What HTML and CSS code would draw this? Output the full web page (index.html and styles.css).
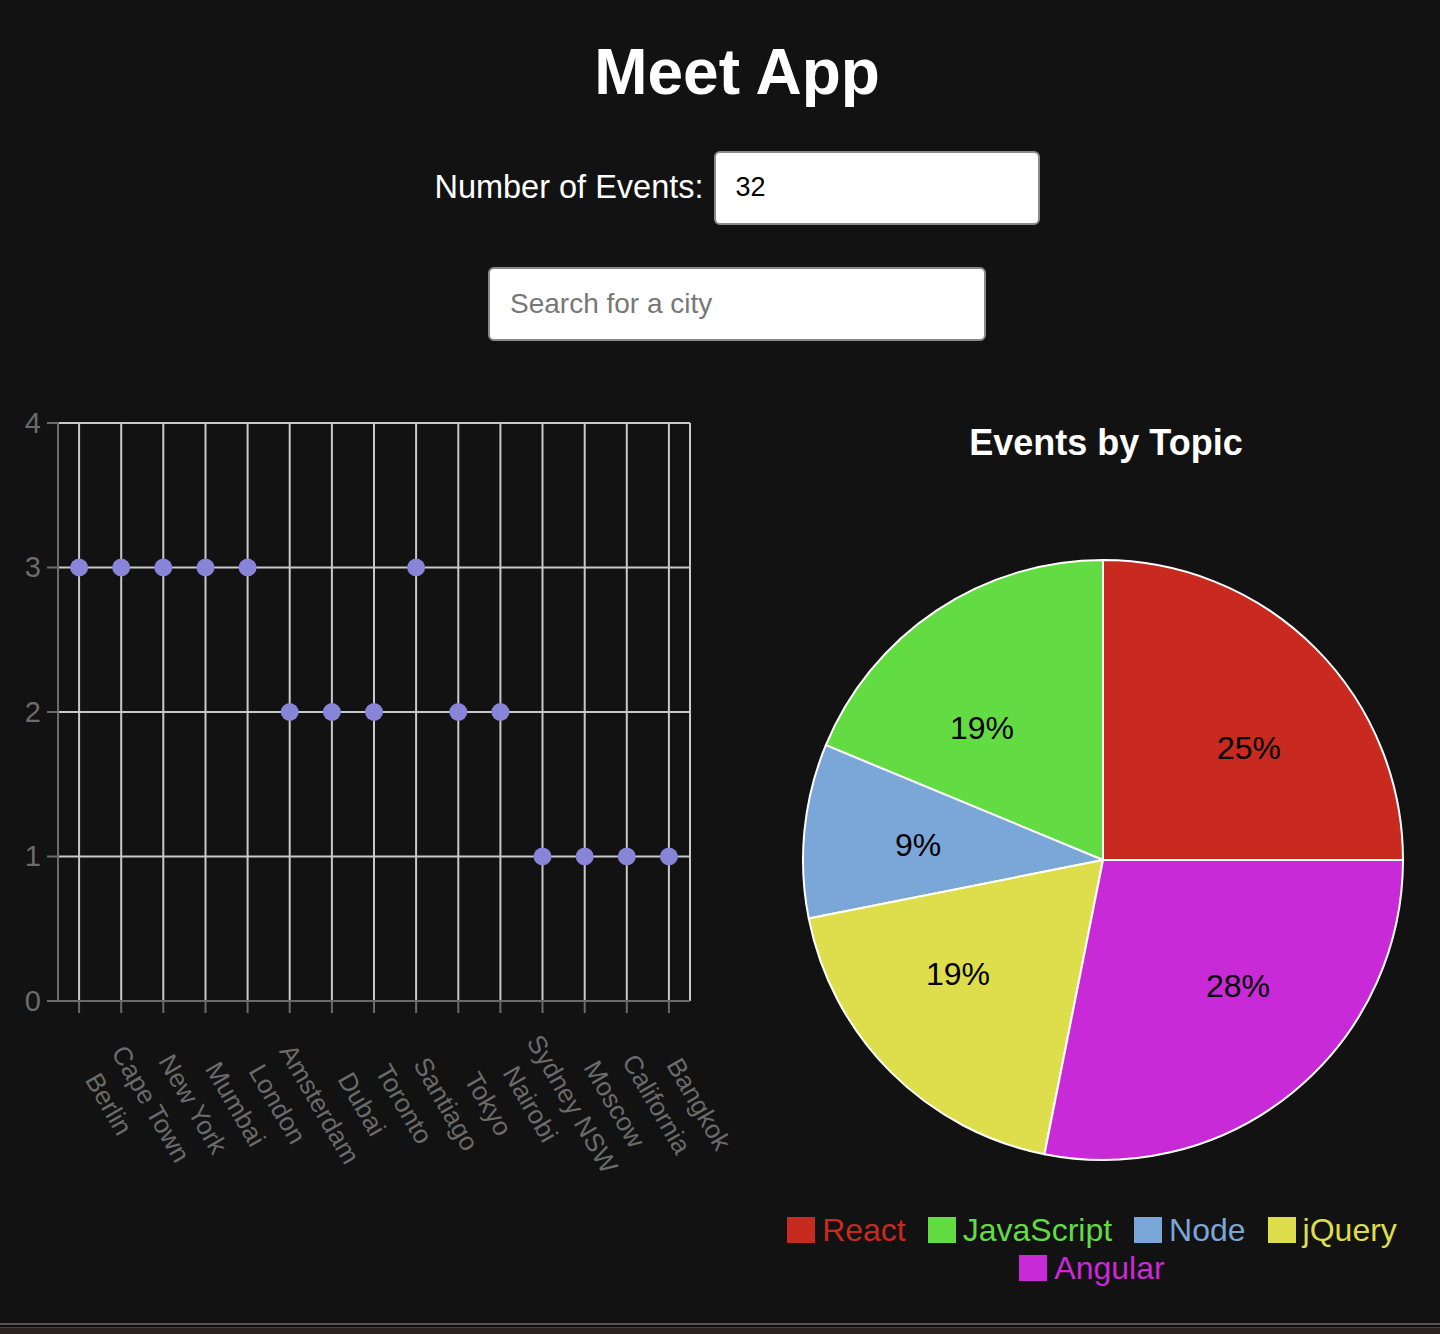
FILE: index.html
```html
<!DOCTYPE html>
<html lang="en">
<head>
<meta charset="utf-8">
<title>Meet App</title>
<link rel="stylesheet" href="styles.css">
</head>
<body>
<div class="page">
  <header class="header">
    <h1 class="title">Meet App</h1>
    <div class="events-row">
      <label class="events-label" for="num">Number of Events:</label>
      <input class="field events-input" id="num" type="text" value="32">
    </div>
    <input class="field search-input" type="text" placeholder="Search for a city">
  </header>

  <section class="charts">
    <svg class="scatter" width="760" height="800" viewBox="0 400 760 800" xmlns="http://www.w3.org/2000/svg">
      <g class="grid" stroke="#c9c9c9" stroke-width="2" fill="none">
        <line x1="58" y1="423" x2="690" y2="423"/>
        <line x1="58" y1="567.5" x2="690" y2="567.5"/>
        <line x1="58" y1="712" x2="690" y2="712"/>
        <line x1="58" y1="856.5" x2="690" y2="856.5"/>
        <line x1="79.1" y1="423" x2="79.1" y2="1001"/>
        <line x1="121.2" y1="423" x2="121.2" y2="1001"/>
        <line x1="163.3" y1="423" x2="163.3" y2="1001"/>
        <line x1="205.5" y1="423" x2="205.5" y2="1001"/>
        <line x1="247.6" y1="423" x2="247.6" y2="1001"/>
        <line x1="289.7" y1="423" x2="289.7" y2="1001"/>
        <line x1="331.9" y1="423" x2="331.9" y2="1001"/>
        <line x1="374" y1="423" x2="374" y2="1001"/>
        <line x1="416.1" y1="423" x2="416.1" y2="1001"/>
        <line x1="458.3" y1="423" x2="458.3" y2="1001"/>
        <line x1="500.4" y1="423" x2="500.4" y2="1001"/>
        <line x1="542.5" y1="423" x2="542.5" y2="1001"/>
        <line x1="584.7" y1="423" x2="584.7" y2="1001"/>
        <line x1="626.8" y1="423" x2="626.8" y2="1001"/>
        <line x1="668.9" y1="423" x2="668.9" y2="1001"/>
        <line x1="690" y1="423" x2="690" y2="1001"/>
      </g>
      <g class="axes" stroke="#6b6b6b" stroke-width="2" fill="none">
        <line x1="58" y1="422" x2="58" y2="1001"/>
        <line x1="57" y1="1001" x2="690" y2="1001"/>
        <line x1="47" y1="423" x2="58" y2="423"/>
        <line x1="47" y1="567.5" x2="58" y2="567.5"/>
        <line x1="47" y1="712" x2="58" y2="712"/>
        <line x1="47" y1="856.5" x2="58" y2="856.5"/>
        <line x1="47" y1="1001" x2="58" y2="1001"/>
        <line x1="79.1" y1="1001" x2="79.1" y2="1013"/>
        <line x1="121.2" y1="1001" x2="121.2" y2="1013"/>
        <line x1="163.3" y1="1001" x2="163.3" y2="1013"/>
        <line x1="205.5" y1="1001" x2="205.5" y2="1013"/>
        <line x1="247.6" y1="1001" x2="247.6" y2="1013"/>
        <line x1="289.7" y1="1001" x2="289.7" y2="1013"/>
        <line x1="331.9" y1="1001" x2="331.9" y2="1013"/>
        <line x1="374" y1="1001" x2="374" y2="1013"/>
        <line x1="416.1" y1="1001" x2="416.1" y2="1013"/>
        <line x1="458.3" y1="1001" x2="458.3" y2="1013"/>
        <line x1="500.4" y1="1001" x2="500.4" y2="1013"/>
        <line x1="542.5" y1="1001" x2="542.5" y2="1013"/>
        <line x1="584.7" y1="1001" x2="584.7" y2="1013"/>
        <line x1="626.8" y1="1001" x2="626.8" y2="1013"/>
        <line x1="668.9" y1="1001" x2="668.9" y2="1013"/>
      </g>
      <g class="y-labels" fill="#6b6b6b" text-anchor="end" dominant-baseline="central">
        <text x="41" y="423">4</text>
        <text x="41" y="567">3</text>
        <text x="41" y="712">2</text>
        <text x="41" y="856">1</text>
        <text x="41" y="1001">0</text>
      </g>
      <g class="x-labels" fill="#6b6b6b" text-anchor="middle" dominant-baseline="central">
        <text x="109" y="1104" transform="rotate(60 109 1104)">Berlin</text>
        <text x="151" y="1104" transform="rotate(60 151 1104)">Cape Town</text>
        <text x="193" y="1104" transform="rotate(60 193 1104)">New York</text>
        <text x="235.5" y="1104" transform="rotate(60 235.5 1104)">Mumbai</text>
        <text x="277.6" y="1104" transform="rotate(60 277.6 1104)">London</text>
        <text x="319.7" y="1104" transform="rotate(60 319.7 1104)">Amsterdam</text>
        <text x="361.9" y="1104" transform="rotate(60 361.9 1104)">Dubai</text>
        <text x="404" y="1104" transform="rotate(60 404 1104)">Toronto</text>
        <text x="446.1" y="1104" transform="rotate(60 446.1 1104)">Santiago</text>
        <text x="488.3" y="1104" transform="rotate(60 488.3 1104)">Tokyo</text>
        <text x="530.4" y="1104" transform="rotate(60 530.4 1104)">Nairobi</text>
        <text x="572.5" y="1104" transform="rotate(60 572.5 1104)">Sydney NSW</text>
        <text x="614.7" y="1104" transform="rotate(60 614.7 1104)">Moscow</text>
        <text x="656.8" y="1104" transform="rotate(60 656.8 1104)">California</text>
        <text x="698.9" y="1104" transform="rotate(60 698.9 1104)">Bangkok</text>
      </g>
      <g class="dots" fill="#8884d8">
        <circle cx="79.1" cy="567.5" r="9"/>
        <circle cx="121.2" cy="567.5" r="9"/>
        <circle cx="163.3" cy="567.5" r="9"/>
        <circle cx="205.5" cy="567.5" r="9"/>
        <circle cx="247.6" cy="567.5" r="9"/>
        <circle cx="289.7" cy="712" r="9"/>
        <circle cx="331.9" cy="712" r="9"/>
        <circle cx="374" cy="712" r="9"/>
        <circle cx="416.1" cy="567.5" r="9"/>
        <circle cx="458.3" cy="712" r="9"/>
        <circle cx="500.4" cy="712" r="9"/>
        <circle cx="542.5" cy="856.5" r="9"/>
        <circle cx="584.7" cy="856.5" r="9"/>
        <circle cx="626.8" cy="856.5" r="9"/>
        <circle cx="668.9" cy="856.5" r="9"/>
      </g>
    </svg>

    <div class="pie-col">
      <h3 class="pie-title">Events by Topic</h3>
      <svg class="pie" width="680" height="747" viewBox="760 464 680 747" xmlns="http://www.w3.org/2000/svg">
        <g stroke="#ffffff" stroke-width="2" stroke-linejoin="round">
          <path fill="#c92a1f" d="M1103,860 L1403,860 A300,300 0 0 0 1103,560 Z"/>
          <path fill="#63dc43" d="M1103,860 L1103,560 A300,300 0 0 0 825.84,745.19 Z"/>
          <path fill="#7ba6d8" d="M1103,860 L825.84,745.19 A300,300 0 0 0 808.76,918.53 Z"/>
          <path fill="#dedd4b" d="M1103,860 L808.76,918.53 A300,300 0 0 0 1044.47,1154.24 Z"/>
          <path fill="#c92ad7" d="M1103,860 L1044.47,1154.24 A300,300 0 0 0 1403,860 Z"/>
        </g>
        <g class="pct" fill="#000000" text-anchor="middle" dominant-baseline="central">
          <text x="1249" y="748">25%</text>
          <text x="982" y="728">19%</text>
          <text x="918" y="845">9%</text>
          <text x="958" y="974">19%</text>
          <text x="1238" y="986">28%</text>
        </g>
      </svg>
      <ul class="legend">
        <li class="legend-item legend-react"><span class="swatch"></span>React</li>
        <li class="legend-item legend-js"><span class="swatch"></span>JavaScript</li>
        <li class="legend-item legend-node"><span class="swatch"></span>Node</li>
        <li class="legend-item legend-jquery"><span class="swatch"></span>jQuery</li>
        <li class="legend-item legend-angular"><span class="swatch"></span>Angular</li>
      </ul>
    </div>
  </section>

  <div class="window-edge"></div>
</div>
</body>
</html>
```

FILE: styles.css
```css
* {
  box-sizing: border-box;
}

html, body {
  margin: 0;
  padding: 0;
  background: #121212;
}

body {
  font-family: "Liberation Sans", Arial, sans-serif;
  color: #ffffff;
}

.page {
  min-height: 1334px;
  display: flex;
  flex-direction: column;
}

.header {
  display: flex;
  flex-direction: column;
  align-items: center;
  padding-left: 34px;
}

.title {
  margin: 36px 0 0;
  font-size: 64px;
  line-height: 1.15;
  font-weight: 700;
  color: #ffffff;
}

.events-row {
  display: flex;
  align-items: center;
  gap: 10px;
  margin-top: 41px;
}

.events-label {
  font-size: 32.5px;
  color: #ffffff;
}

.field {
  height: 74px;
  border: 2px solid #8a8a8a;
  border-radius: 6px;
  background: #ffffff;
  padding: 0 20px;
  font-family: "Liberation Sans", Arial, sans-serif;
  outline: none;
}

.events-input {
  width: 326px;
  font-size: 27px;
  color: #000000;
}

.search-input {
  width: 498px;
  margin-top: 42px;
  font-size: 28px;
  color: #000000;
}

.search-input::placeholder {
  color: #777777;
}

.charts {
  display: flex;
  margin-top: 59px;
}

.scatter {
  display: block;
  flex: none;
  font-family: "Liberation Sans", Arial, sans-serif;
}

.y-labels {
  font-size: 29px;
}

.x-labels {
  font-size: 26px;
}

.pie-col {
  width: 680px;
  flex: none;
}

.pie-title {
  margin: 21px 0 0;
  padding-left: 12px;
  font-size: 36px;
  line-height: 43px;
  font-weight: 700;
  text-align: center;
  color: #ffffff;
}

.pie {
  display: block;
  font-family: "Liberation Sans", Arial, sans-serif;
}

.pct {
  font-size: 32px;
}

.legend {
  list-style: none;
  margin: 0 0 0 12px;
  padding: 0;
  width: 640px;
  display: flex;
  flex-wrap: wrap;
  justify-content: center;
  column-gap: 22px;
  font-size: 32px;
  line-height: 38px;
}

.legend-item {
  display: flex;
  align-items: center;
  gap: 7px;
}

.swatch {
  display: block;
  width: 28px;
  height: 26px;
  background: currentColor;
}

.legend-react { color: #c92a1f; }
.legend-js { color: #63dc43; }
.legend-node { color: #7ba6d8; }
.legend-jquery { color: #dedd4b; }
.legend-angular { color: #c92ad7; }

.window-edge {
  margin-top: auto;
  height: 11px;
  border-top: 2px solid #555555;
  background: linear-gradient(#0c0c0c 0 2px, #4a403d 2px 3px, #2c221f 3px);
}
```
